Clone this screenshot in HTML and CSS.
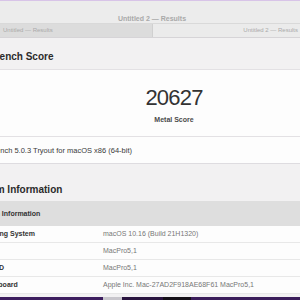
FILE: index.html
```html
<!DOCTYPE html>
<html>
<head>
<meta charset="utf-8">
<link rel="stylesheet" href="styles.css">
</head>
<body>
<div class="window">
  <div class="topline"></div>
  <div class="titlebar">Untitled 2 — Results</div>
  <div class="tabs">
    <div class="tab tab-left">Untitled — Results</div>
    <div class="tab tab-right">Untitled 2 — Results</div>
  </div>
  <div class="content">
    <h2 class="heading heading-first">Geekbench Score</h2>
    <div class="card score-card">
      <div class="score-col">
        <div class="score">20627</div>
        <div class="score-label">Metal Score</div>
      </div>
    </div>
    <div class="card version-row">Geekbench 5.0.3 Tryout for macOS x86 (64-bit)</div>
    <h2 class="heading heading-second">System Information</h2>
    <div class="table">
      <div class="trow thead"><span class="label">System Information</span><span class="value"></span></div>
      <div class="trow"><span class="label">Operating System</span><span class="value">macOS 10.16 (Build 21H1320)</span></div>
      <div class="trow"><span class="label">Model</span><span class="value">MacPro5,1</span></div>
      <div class="trow"><span class="label">Model ID</span><span class="value">MacPro5,1</span></div>
      <div class="trow"><span class="label">Motherboard</span><span class="value">Apple Inc. Mac-27AD2F918AE68F61 MacPro5,1</span></div>
    </div>
  </div>
</div>
<div class="desktop">
  <span class="seg seg-a"></span>
  <span class="seg seg-b"></span>
  <span class="seg seg-c"></span>
  <span class="seg seg-d"></span>
</div>
</body>
</html>
```

FILE: styles.css
```css
html, body {
  margin: 0;
  padding: 0;
}
body {
  width: 300px;
  height: 300px;
  overflow: hidden;
  background: #3a1d5a;
  font-family: "Liberation Sans", Arial, sans-serif;
  display: flex;
  flex-direction: column;
}
.window {
  height: 297px;
  flex: 0 0 297px;
  background: #f2f1f2;
  display: flex;
  flex-direction: column;
  overflow: hidden;
}
.topline {
  height: 1px;
  background: #d8c4e8;
}
.titlebar {
  height: 22px;
  background: #ececec;
  color: #a9a9a9;
  font-size: 7px;
  font-weight: bold;
  text-align: center;
  line-height: 10px;
  padding-top: 13px;
  padding-left: 4px;
  box-sizing: border-box;
}
.tabs {
  display: flex;
  height: 15px;
  border-top: 1px solid #d9d9d9;
  border-bottom: 1px solid #d6d4d7;
  box-sizing: border-box;
}
.tab {
  font-size: 6px;
  color: #aaaaaa;
  line-height: 13px;
  box-sizing: border-box;
}
.tab-left {
  width: 153px;
  background: #dcdcdc;
  padding-left: 3px;
  border-right: 1px solid #d0d0d0;
}
.tab-right {
  flex: 1;
  background: #ebebeb;
  text-align: right;
  padding-right: 2px;
}
.content {
  margin-left: -40px;
  width: 428px;
  display: flex;
  flex-direction: column;
}
.heading {
  margin: 0;
  font-size: 10px;
  font-weight: bold;
  color: #2b2b2b;
  line-height: 14px;
  padding-left: 9px;
}
.heading-first {
  padding-top: 12px;
  padding-bottom: 5px;
}
.heading-second {
  padding-top: 19px;
  padding-bottom: 4px;
}
.card {
  background: #fdfdfd;
  border-top: 1px solid #e3e1e4;
}
.score-card {
  display: flex;
  justify-content: center;
  padding-top: 17px;
  height: 67px;
  box-sizing: border-box;
}
.score-col {
  display: flex;
  flex-direction: column;
  align-items: center;
}
.score {
  font-size: 22px;
  line-height: 22px;
  letter-spacing: -0.8px;
  color: #333333;
}
.score-label {
  margin-top: 6px;
  font-size: 7px;
  line-height: 9px;
  font-weight: bold;
  color: #4a4a4a;
}
.version-row {
  height: 28px;
  line-height: 27px;
  box-sizing: border-box;
  border-bottom: 1px solid #dedce0;
  font-size: 7.5px;
  color: #3a3a3a;
  padding-left: 14px;
}
.table {
  display: flex;
  flex-direction: column;
}
.trow {
  display: flex;
  height: 17px;
  box-sizing: border-box;
  line-height: 16px;
  border-bottom: 1px solid #e8e8e8;
  background: #fdfdfd;
  font-size: 7px;
  padding-left: 15px;
}
.thead {
  height: 25px;
  line-height: 25px;
  background: #dedede;
  border-bottom: none;
}
.label {
  width: 128px;
  font-weight: bold;
  color: #333333;
  white-space: nowrap;
}
.value {
  color: #777777;
  white-space: nowrap;
}
.desktop {
  flex: 1;
  display: flex;
}
.seg {
  height: 100%;
}
.seg-a {
  width: 103px;
  background: #3c1d5e;
}
.seg-b {
  width: 19px;
  background: #c8c6cc;
}
.seg-c {
  width: 41px;
  background: #2a1540;
}
.seg-d {
  width: 28px;
  background: #151018;
}
```
